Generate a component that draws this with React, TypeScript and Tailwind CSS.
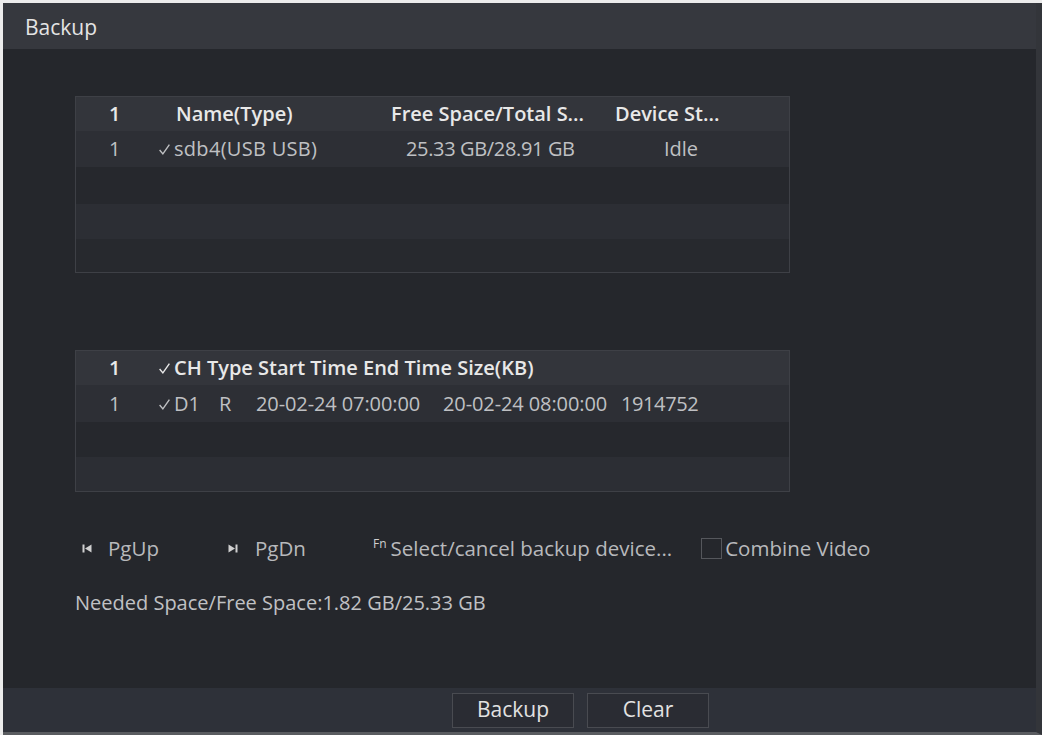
import React from "react";

const font = { fontFamily: '"Open Sans", "Noto Sans", sans-serif' };

function Check() {
  return (
    <svg width="13" height="13" viewBox="0 0 12 12" className="inline-block mr-[3px] -mt-[2px]">
      <path d="M1.5 6.5 L4.5 10 L10.5 1.5" fill="none" stroke="currentColor" strokeWidth="1.3" />
    </svg>
  );
}

function PrevIcon() {
  return (
    <svg width="10" height="9" viewBox="0 0 10 9" className="inline-block">
      <rect x="0.5" y="0.5" width="2" height="8" fill="#d0d0d0" />
      <path d="M9.5 0.5 L3 4.5 L9.5 8.5 Z" fill="#d0d0d0" />
    </svg>
  );
}

function NextIcon() {
  return (
    <svg width="10" height="9" viewBox="0 0 10 9" className="inline-block">
      <path d="M0.5 0.5 L7 4.5 L0.5 8.5 Z" fill="#d0d0d0" />
      <rect x="7.5" y="0.5" width="2" height="8" fill="#d0d0d0" />
    </svg>
  );
}

export default function App() {
  return (
    <div className="w-[1042px] h-[735px] bg-[#ececec] pt-[3px] pl-[3px] overflow-hidden" style={font}>
      <div className="h-full flex flex-col bg-[#25272c] border-r-[6px] border-r-[#33353a] border-b-[3px] border-b-[#5a5c60]">
        {/* Title bar */}
        <div className="h-[46px] shrink-0 bg-[#36383e] flex items-center pl-[22px] pt-[3px] text-[21px] text-[#e4e4e4]">
          Backup
        </div>

        {/* Content */}
        <div className="flex-1 flex flex-col pl-[72px]">
          {/* Table 1 */}
          <div className="mt-[47px] w-[715px] border border-[#3e4046] text-[20px]">
            <div className="h-[34px] bg-[#33353b] flex items-center text-[#e8e8e8] font-semibold whitespace-nowrap">
              <div className="w-[82px] pl-[33px]">1</div>
              <div className="w-[223px] pl-[18px]">Name(Type)</div>
              <div className="w-[220px] pl-[10px]">Free Space/Total S...</div>
              <div className="flex-1 pl-[14px]">Device St...</div>
            </div>
            <div className="h-[36px] bg-[#2d2f35] flex items-center text-[#bfc0c3] whitespace-nowrap">
              <div className="w-[82px] pl-[33px]">1</div>
              <div className="w-[223px] tracking-[0.3px]"><Check />sdb4(USB USB)</div>
              <div className="w-[220px] pl-[25px] tracking-[-0.35px]">25.33 GB/28.91 GB</div>
              <div className="flex-1 pl-[63px]">Idle</div>
            </div>
            <div className="h-[37px] bg-[#26282d]" />
            <div className="h-[35px] bg-[#2c2e34]" />
            <div className="h-[33px] bg-[#27292e]" />
          </div>

          {/* Table 2 */}
          <div className="mt-[77px] w-[715px] border border-[#3e4046] text-[20px]">
            <div className="h-[34px] bg-[#33353b] flex items-center text-[#e8e8e8] font-semibold whitespace-nowrap">
              <div className="w-[82px] pl-[33px]">1</div>
              <div><Check />CH Type Start Time End Time Size(KB)</div>
            </div>
            <div className="h-[37px] bg-[#2d2f35] flex items-center text-[#bfc0c3] whitespace-nowrap">
              <div className="w-[82px] pl-[33px]">1</div>
              <div className="w-[61px]"><Check />D1</div>
              <div className="w-[37px]">R</div>
              <div className="w-[187px] tracking-[-0.1px]">20-02-24 07:00:00</div>
              <div className="w-[178px] tracking-[-0.1px]">20-02-24 08:00:00</div>
              <div className="tracking-[-0.4px]">1914752</div>
            </div>
            <div className="h-[35px] bg-[#26282d]" />
            <div className="h-[34px] bg-[#2c2e34]" />
          </div>

          {/* Controls row */}
          <div className="mt-[44px] h-[24px] flex items-center text-[20.5px] text-[#b8b9bc] whitespace-nowrap">
            <div className="w-[10px] ml-[7px] flex items-center"><PrevIcon /></div>
            <div className="ml-[16px] w-[120px]">PgUp</div>
            <div className="w-[12px] flex items-center"><NextIcon /></div>
            <div className="ml-[15px] w-[118px]">PgDn</div>
            <div className="flex items-start">
              <span className="text-[12px] leading-none mt-[5px] mr-[4px] text-[#d0d0d0]">Fn</span>
              <span>Select/cancel backup device...</span>
            </div>
            <div className="ml-[29px] w-[21px] h-[21px] border border-[#55575c]" />
            <div className="ml-[3px]">Combine Video</div>
          </div>

          {/* Needed space */}
          <div className="mt-[28px] text-[20px] text-[#c0c1c4] whitespace-nowrap">
            Needed Space/Free Space:1.82 GB/25.33 GB
          </div>
        </div>

        {/* Bottom bar */}
        <div className="h-[44px] shrink-0 bg-[#2e3139] flex items-center pl-[449px] gap-[13px]">
          <button className="w-[122px] h-[35px] border border-[#494b51] bg-[#2a2c33] text-[21px] text-[#e2e2e2]" style={font}>
            Backup
          </button>
          <button className="w-[122px] h-[35px] border border-[#494b51] bg-[#2a2c33] text-[21px] text-[#e2e2e2]" style={font}>
            Clear
          </button>
        </div>
      </div>
    </div>
  );
}
